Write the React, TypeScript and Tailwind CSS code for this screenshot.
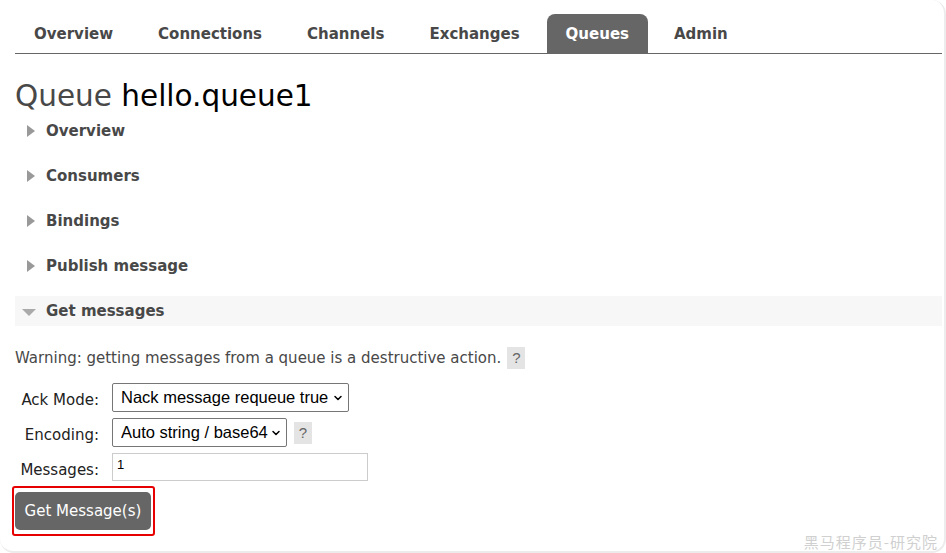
import { ChevronDown } from "lucide-react";
import { FC } from "react";

const verdana = { fontFamily: '"DejaVu Sans", Verdana, sans-serif' };
const arial = { fontFamily: '"Liberation Sans", Arial, sans-serif' };

const tabs = ["Overview", "Connections", "Channels", "Exchanges", "Queues", "Admin"];
const sections = ["Overview", "Consumers", "Bindings", "Publish message"];

const Help: FC<{ className?: string }> = ({ className }) => (
  <span
    className={"inline-flex h-[22px] w-[18px] items-center justify-center bg-[#e4e4e4] text-[15px] text-[#666] " + (className ?? "")}
    style={arial}
  >
    ?
  </span>
);

const Select: FC<{ value: string; width: string }> = ({ value, width }) => (
  <div className={"relative " + width}>
    <select
      className="h-[29px] w-full appearance-none rounded-[2px] border border-[#767676] bg-white pl-[8px] pr-[18px] text-[16.5px] text-black outline-none"
      style={arial}
      defaultValue={value}
    >
      <option>{value}</option>
    </select>
    <ChevronDown size={12} strokeWidth={3} className="pointer-events-none absolute right-[5px] top-[9px] text-black" />
  </div>
);

const App: FC = () => {
  return (
    <div className="h-[553px] w-[946px] overflow-hidden bg-white">
      <div className="relative h-full w-full rounded-[14px] border-r-[2px] border-b-[2px] border-[#ececec] pl-[15px] pr-[2px]" style={verdana}>
        <nav className="flex gap-[7px] border-b border-[#666] pt-[14px]">
          {tabs.map((t) => (
            <div
              key={t}
              className={
                "flex h-[39px] items-center px-[19px] pt-[2px] text-[15px] font-bold " +
                (t === "Queues" ? "ml-[1px] rounded-t-[8px] bg-[#666] text-white" : "text-[#484848]")
              }
            >
              {t}
            </div>
          ))}
        </nav>

        <h1 className="mt-[25px] text-[29.5px] leading-[34px] text-[#484848]">
          Queue <span className="text-black">hello.queue1</span>
        </h1>

        <div className="mt-[3px] flex flex-col gap-[15px]">
          {sections.map((s) => (
            <div key={s} className="flex h-[30px] items-center text-[15px] font-bold text-[#484848]">
              <span className="ml-[12px] mr-[11px] h-0 w-0 border-y-[6.5px] border-l-[8px] border-y-transparent border-l-[#999]" />
              {s}
            </div>
          ))}
          <div className="flex h-[30px] items-center bg-[#f7f7f7] text-[15px] font-bold text-[#484848]">
            <span className="ml-[7px] mr-[10px] mt-[2px] h-0 w-0 border-x-[7px] border-t-[7px] border-x-transparent border-t-[#aaa]" />
            Get messages
          </div>
        </div>

        <div className="mt-[21px] flex items-center text-[15px] text-[#484848]">
          Warning: getting messages from a queue is a destructive action.
          <Help className="ml-[6px]" />
        </div>

        <div className="mt-[13px] grid grid-cols-[84px_auto] items-center gap-x-[13px] gap-y-[6px] text-[15px] text-[#222]">
          <div className="pt-[6px] text-right">Ack Mode:</div>
          <Select value="Nack message requeue true" width="w-[237px]" />
          <div className="pt-[6px] text-right">Encoding:</div>
          <div className="flex items-center gap-[7px]">
            <Select value="Auto string / base64" width="w-[175px]" />
            <Help className="mt-[2px]" />
          </div>
          <div className="pt-[6px] text-right">Messages:</div>
          <input
            defaultValue="1"
            className="h-[28px] w-[256px] border border-[#ccc] px-[4px] pb-[4px] text-[13px] text-black outline-none"
            style={arial}
          />
        </div>

        <div className="-ml-[3px] mt-[5px] inline-block rounded-[3px] border-2 border-[#e60000] py-[4px] pl-[1px] pr-[2px]">
          <button
            className="flex h-[38px] w-[136px] items-center justify-center rounded-[5px] bg-[#666] text-[15px] text-white"
            style={verdana}
          >
            Get Message(s)
          </button>
        </div>

        <div
          className="absolute bottom-[-2px] right-[6px] text-[15px] tracking-[1px] text-[#d0d0d0]"
          style={{ fontFamily: '"Noto Sans CJK SC", sans-serif' }}
        >
          黑马程序员-研究院
        </div>
      </div>
    </div>
  );
};

export default App;
